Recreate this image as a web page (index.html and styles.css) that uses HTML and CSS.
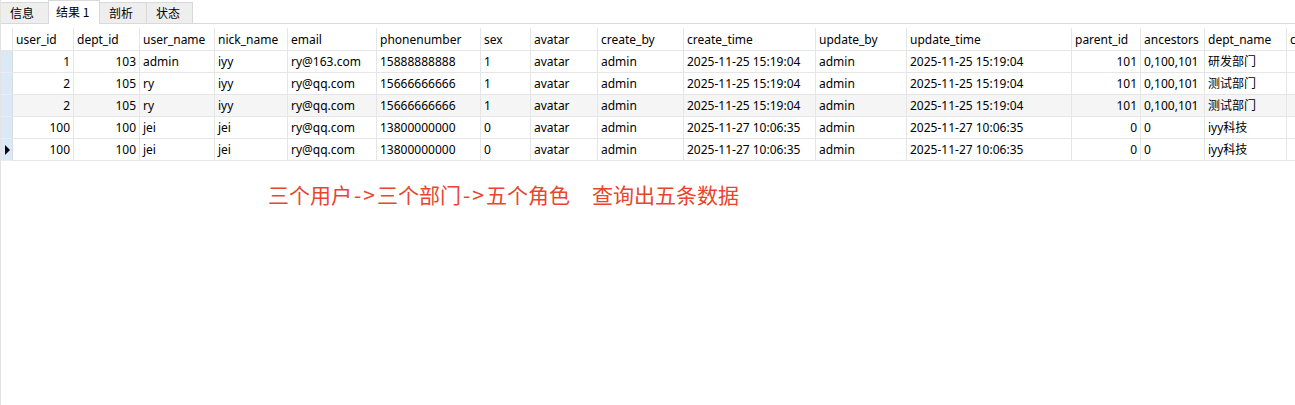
FILE: index.html
```html
<!DOCTYPE html>
<html lang="zh">
<head>
<meta charset="utf-8">
<title>结果 1</title>
<link rel="stylesheet" href="styles.css">
</head>
<body>
<div class="page">
  <div class="tabbar">
    <div class="tab">信息</div>
    <div class="tab active">结果 1</div>
    <div class="tab">剖析</div>
    <div class="tab">状态</div>
  </div>
  <div class="grid">
    <div class="row head">
      <div class="ind"></div>
      <div class="c">user_id</div><div class="c">dept_id</div><div class="c">user_name</div><div class="c">nick_name</div><div class="c">email</div><div class="c">phonenumber</div><div class="c">sex</div><div class="c">avatar</div><div class="c">create_by</div><div class="c">create_time</div><div class="c">update_by</div><div class="c">update_time</div><div class="c">parent_id</div><div class="c">ancestors</div><div class="c">dept_name</div><div class="c">c</div>
    </div>
    <div class="row">
      <div class="ind"></div>
      <div class="c n">1</div><div class="c n">103</div><div class="c">admin</div><div class="c">iyy</div><div class="c">ry@163.com</div><div class="c">15888888888</div><div class="c">1</div><div class="c">avatar</div><div class="c">admin</div><div class="c">2025-11-25 15:19:04</div><div class="c">admin</div><div class="c">2025-11-25 15:19:04</div><div class="c n">101</div><div class="c">0,100,101</div><div class="c">研发部门</div><div class="c"></div>
    </div>
    <div class="row">
      <div class="ind"></div>
      <div class="c n">2</div><div class="c n">105</div><div class="c">ry</div><div class="c">iyy</div><div class="c">ry@qq.com</div><div class="c">15666666666</div><div class="c">1</div><div class="c">avatar</div><div class="c">admin</div><div class="c">2025-11-25 15:19:04</div><div class="c">admin</div><div class="c">2025-11-25 15:19:04</div><div class="c n">101</div><div class="c">0,100,101</div><div class="c">测试部门</div><div class="c"></div>
    </div>
    <div class="row alt">
      <div class="ind"></div>
      <div class="c n">2</div><div class="c n">105</div><div class="c">ry</div><div class="c">iyy</div><div class="c">ry@qq.com</div><div class="c">15666666666</div><div class="c">1</div><div class="c">avatar</div><div class="c">admin</div><div class="c">2025-11-25 15:19:04</div><div class="c">admin</div><div class="c">2025-11-25 15:19:04</div><div class="c n">101</div><div class="c">0,100,101</div><div class="c">测试部门</div><div class="c"></div>
    </div>
    <div class="row">
      <div class="ind"></div>
      <div class="c n">100</div><div class="c n">100</div><div class="c">jei</div><div class="c">jei</div><div class="c">ry@qq.com</div><div class="c">13800000000</div><div class="c">0</div><div class="c">avatar</div><div class="c">admin</div><div class="c">2025-11-27 10:06:35</div><div class="c">admin</div><div class="c">2025-11-27 10:06:35</div><div class="c n">0</div><div class="c">0</div><div class="c">iyy科技</div><div class="c"></div>
    </div>
    <div class="row">
      <div class="ind current"><span class="marker"></span></div>
      <div class="c n">100</div><div class="c n">100</div><div class="c">jei</div><div class="c">jei</div><div class="c">ry@qq.com</div><div class="c">13800000000</div><div class="c">0</div><div class="c">avatar</div><div class="c">admin</div><div class="c">2025-11-27 10:06:35</div><div class="c">admin</div><div class="c">2025-11-27 10:06:35</div><div class="c n">0</div><div class="c">0</div><div class="c">iyy科技</div><div class="c"></div>
    </div>
  </div>
  <p class="note">三个用户<span class="arrow">-&gt;</span>三个部门<span class="arrow">-&gt;</span>五个角色<span class="gap"></span>查询出五条数据</p>
</div>
</body>
</html>
```

FILE: styles.css
```css
html, body {
  margin: 0;
  padding: 0;
  background: #ffffff;
}
body {
  width: 1295px;
  height: 405px;
  overflow: hidden;
  font-family: "Noto Sans", "Noto Sans CJK SC", sans-serif;
  font-size: 12px;
  color: #000000;
}
.page {
  height: 405px;
  border-left: 1px solid #e3e3e3;
  box-sizing: border-box;
  overflow: hidden;
}
.tabbar {
  display: flex;
  align-items: flex-end;
  height: 23px;
  border-bottom: 1px solid #d9d9d9;
  margin-left: -1px;
}
.tab {
  box-sizing: border-box;
  height: 21px;
  line-height: 19px;
  padding: 0 9px;
  width: 48px;
  background: #eeeeee;
  border: 1px solid #d9d9d9;
  border-bottom: none;
  border-right: none;
  font-family: "Noto Sans CJK SC", sans-serif;
  font-size: 12px;
  color: #000;
}
.tab:last-child {
  border-right: 1px solid #d9d9d9;
  width: 47px;
}
.tab.active {
  height: 24px;
  margin-bottom: -1px;
  line-height: 22px;
  width: 52px;
  background: #ffffff;
  padding: 0 7px;
  border-right: 1px solid #d9d9d9;
}
.tab.active + .tab {
  border-left: none;
  width: 46px;
}
.grid {
  margin-top: 4px;
  width: 1295px;
  overflow: hidden;
}
.row {
  display: grid;
  grid-template-columns: 12px 61px 66px 75px 73px 89px 104px 50px 67px 86px 132px 91px 165px 69px 64px 82px 90px;
  height: 22px;
}
.row.head {
  height: 23px;
}
.c, .ind {
  box-sizing: border-box;
  border-right: 1px solid #e6e6e6;
  border-bottom: 1px solid #e6e6e6;
  padding: 0 3px;
  line-height: 21px;
  white-space: nowrap;
  overflow: hidden;
}
.head .c {
  line-height: 20px;
  padding-top: 2px;
}
.ind {
  background: #dbe8f5;
  border-right-color: #d6dde5;
  border-bottom-color: #e9eef3;
  padding: 0;
  display: flex;
  align-items: center;
  justify-content: center;
}
.head .ind {
  background: #ffffff;
  border-bottom-color: #e6e6e6;
  border-right-color: #e6e6e6;
}
.n {
  text-align: right;
}
.alt .c {
  background: #f5f5f5;
}
.marker {
  width: 0;
  height: 0;
  border-left: 5px solid #000000;
  border-top: 5px solid transparent;
  border-bottom: 5px solid transparent;
  margin-left: 1px;
}
.note {
  margin: 19px 0 0 267px;
  font-family: "Noto Sans CJK SC", sans-serif;
  font-size: 21px;
  line-height: 28px;
  color: #e8452c;
  white-space: pre;
}
.arrow {
  padding: 0 0 0 2px;
  letter-spacing: 2px;
}
.gap {
  display: inline-block;
  width: 22px;
}
```
